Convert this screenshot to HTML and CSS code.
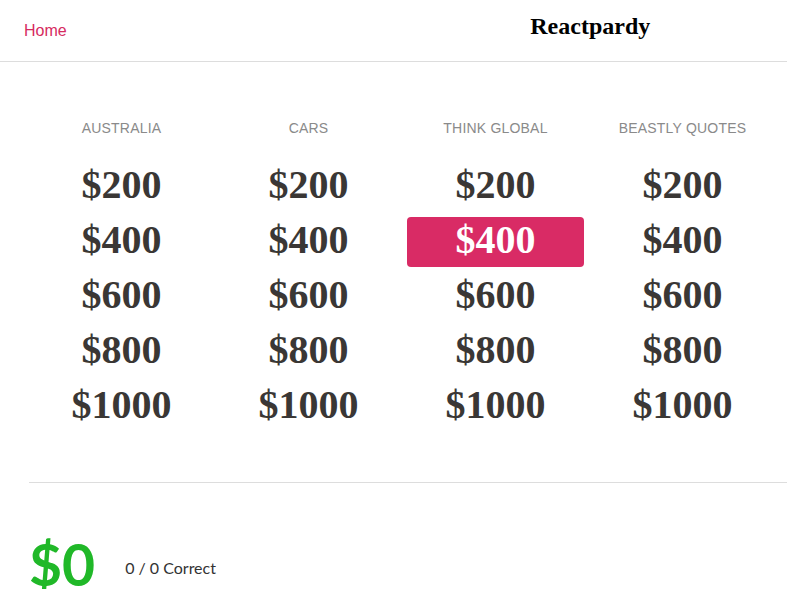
FILE: index.html
```html
<!DOCTYPE html>
<html>
<head>
<meta charset="utf-8">
<title>Reactpardy</title>
<link rel="stylesheet" href="styles.css">
</head>
<body>
<header class="topbar">
  <div class="topbar-left"><a class="home-link" href="#">Home</a></div>
  <div class="topbar-right"><h1 class="title">Reactpardy</h1></div>
</header>
<main class="board">
  <div class="column">
    <div class="category">Australia</div>
    <div class="clue">$200</div>
    <div class="clue">$400</div>
    <div class="clue">$600</div>
    <div class="clue">$800</div>
    <div class="clue">$1000</div>
  </div>
  <div class="column">
    <div class="category">Cars</div>
    <div class="clue">$200</div>
    <div class="clue">$400</div>
    <div class="clue">$600</div>
    <div class="clue">$800</div>
    <div class="clue">$1000</div>
  </div>
  <div class="column">
    <div class="category">Think Global</div>
    <div class="clue">$200</div>
    <div class="clue clue-active">$400</div>
    <div class="clue">$600</div>
    <div class="clue">$800</div>
    <div class="clue">$1000</div>
  </div>
  <div class="column">
    <div class="category">Beastly Quotes</div>
    <div class="clue">$200</div>
    <div class="clue">$400</div>
    <div class="clue">$600</div>
    <div class="clue">$800</div>
    <div class="clue">$1000</div>
  </div>
</main>
<hr class="divider">
<footer class="score">
  <div class="score-total">$0</div>
  <div class="score-count">0 / 0 Correct</div>
</footer>
</body>
</html>
```
FILE: styles.css
```css
html, body {
  margin: 0;
  padding: 0;
  background: #ffffff;
}

body {
  font-family: "Liberation Sans", Arial, sans-serif;
  color: #333;
}

*, *::before, *::after {
  box-sizing: border-box;
}

.topbar {
  display: flex;
  align-items: flex-start;
  height: 62px;
  border-bottom: 1px solid #dddddd;
}

.topbar-left,
.topbar-right {
  width: 50%;
}

.topbar-left {
  padding-left: 24px;
  padding-top: 22px;
}

.home-link {
  font-family: "Liberation Sans", Arial, sans-serif;
  font-size: 16px;
  line-height: 18px;
  color: #d62b60;
  text-decoration: none;
}

.topbar-right {
  display: flex;
  justify-content: center;
  padding-top: 12px;
}

.title {
  margin: 0;
  font-family: "Liberation Serif", "Times New Roman", serif;
  font-weight: bold;
  font-size: 24px;
  line-height: 28px;
  color: #000;
}

.board {
  display: grid;
  grid-template-columns: repeat(4, 187px);
  padding: 58px 0 0 28px;
}

.column {
  display: flex;
  flex-direction: column;
  align-items: stretch;
}

.category {
  font-family: "Liberation Sans", Arial, sans-serif;
  font-size: 14px;
  letter-spacing: 0.2px;
  line-height: 16px;
  text-transform: uppercase;
  color: #8a8a8a;
  text-align: center;
  margin-bottom: 26px;
}

.clue {
  font-family: "Liberation Serif", "Times New Roman", serif;
  font-weight: bold;
  font-size: 40px;
  line-height: 40px;
  height: 50px;
  padding-top: 3px;
  margin: 0 5px 5px;
  text-align: center;
  color: #3a3735;
  border-radius: 4px;
}

.clue-active {
  background: #d92b65;
  color: #ffffff;
}

.divider {
  border: 0;
  border-top: 1px solid #dddddd;
  margin: 45px 0 0 29px;
  height: 0;
}

.score {
  display: flex;
  align-items: flex-end;
  padding: 56px 0 0 29px;
}

.score-total {
  font-family: Lato, "Liberation Sans", sans-serif;
  font-weight: 700;
  font-size: 57px;
  line-height: 50px;
  color: #20b828;
}

.score-count {
  font-family: Lato, "Liberation Sans", sans-serif;
  font-size: 16px;
  line-height: 20px;
  color: #333;
  margin-left: 30px;
  margin-bottom: 11px;
}
```
